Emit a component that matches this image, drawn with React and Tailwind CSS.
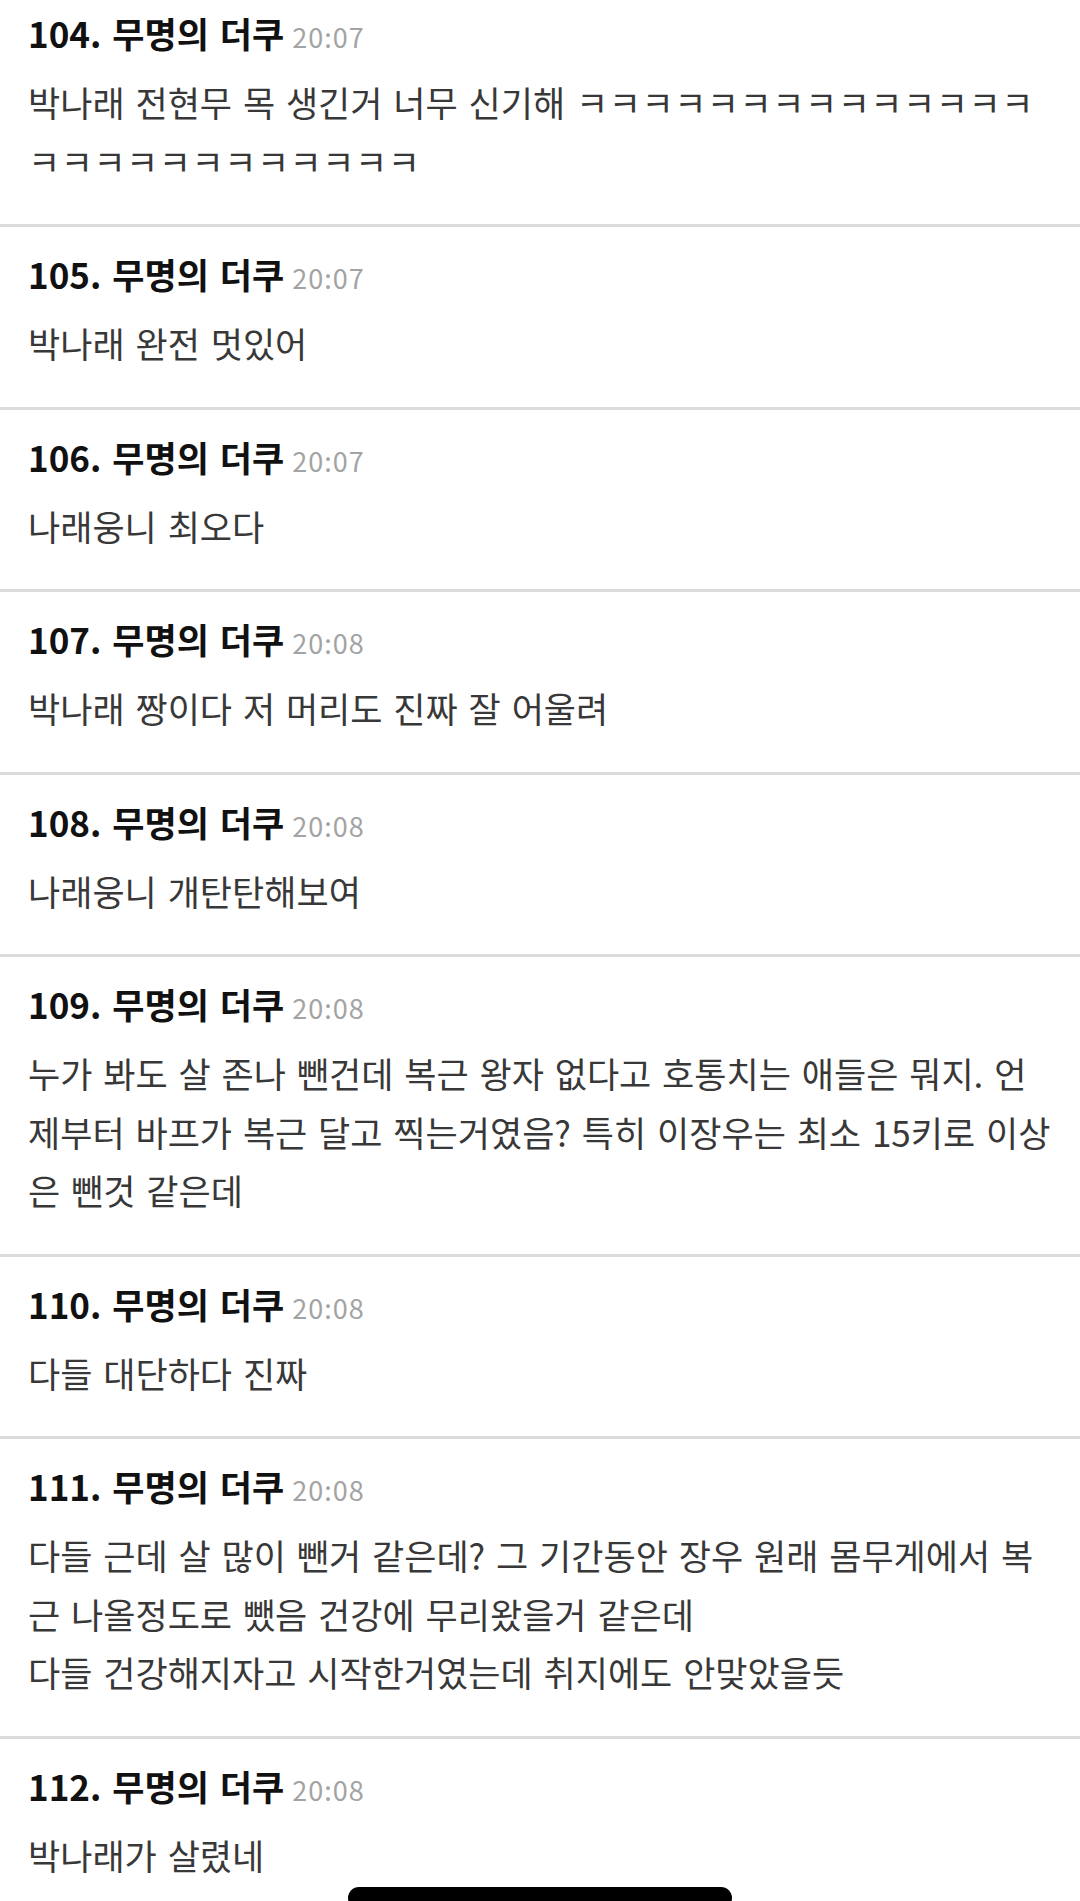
const COMMENTS = [
  {
    no: 104,
    time: "20:07",
    lines: ["박나래 전현무 목 생긴거 너무 신기해 ㅋㅋㅋㅋㅋㅋㅋㅋㅋㅋㅋㅋㅋㅋ", "ㅋㅋㅋㅋㅋㅋㅋㅋㅋㅋㅋㅋ"]
  },
  { no: 105, time: "20:07", lines: ["박나래 완전 멋있어"] },
  { no: 106, time: "20:07", lines: ["나래웅니 최오다"] },
  { no: 107, time: "20:08", lines: ["박나래 짱이다 저 머리도 진짜 잘 어울려"] },
  { no: 108, time: "20:08", lines: ["나래웅니 개탄탄해보여"] },
  {
    no: 109,
    time: "20:08",
    lines: [
      "누가 봐도 살 존나 뺀건데 복근 왕자 없다고 호통치는 애들은 뭐지. 언",
      "제부터 바프가 복근 달고 찍는거였음? 특히 이장우는 최소 15키로 이상",
      "은 뺀것 같은데"
    ]
  },
  { no: 110, time: "20:08", lines: ["다들 대단하다 진짜"] },
  {
    no: 111,
    time: "20:08",
    lines: [
      "다들 근데 살 많이 뺀거 같은데? 그 기간동안 장우 원래 몸무게에서 복",
      "근 나올정도로 뺐음 건강에 무리왔을거 같은데",
      "다들 건강해지자고 시작한거였는데 취지에도 안맞았을듯"
    ]
  },
  { no: 112, time: "20:08", lines: ["박나래가 살렸네"] }
];

// ㅋ runs are set a hair wider, like the phone's font
function Line({ text }) {
  const parts = text.split(/(ㅋ+)/);
  return (
    <div className="whitespace-nowrap">
      {parts.map((part, i) =>
        part.startsWith("ㅋ") ? (
          <span key={i} className="tracking-[0.5px]">
            {part}
          </span>
        ) : (
          part
        )
      )}
    </div>
  );
}

function Comment({ no, time, lines }) {
  return (
    <div className="border-b-[3px] border-[#dcdcdc] pl-[28px] pr-[28px] pt-[27px] pb-[34px]">
      <div className="h-[40px] leading-[40px]">
        <span className="text-[35px] font-bold text-[#111111] [word-spacing:3px]">{no}. 무명의 더쿠</span>
        <span className="ml-[8px] text-[27px] leading-none tracking-[1px] text-[#a3a3a3]">{time}</span>
      </div>
      <div className="mt-[20px] text-[35px] leading-[58.5px] text-[#383838] [word-spacing:3px]">
        {lines.map((line, i) => (
          <Line key={i} text={line} />
        ))}
      </div>
    </div>
  );
}

export default function App() {
  return (
    <div className="relative h-[1901px] w-[1080px] overflow-hidden bg-white font-['Noto_Sans_CJK_KR',sans-serif]">
      <div className="-mt-[14px]">
        {COMMENTS.map((c) => (
          <Comment key={c.no} {...c} />
        ))}
      </div>
      <div className="absolute bottom-[-8px] left-[348px] h-[22px] w-[384px] rounded-full bg-black" />
    </div>
  );
}
